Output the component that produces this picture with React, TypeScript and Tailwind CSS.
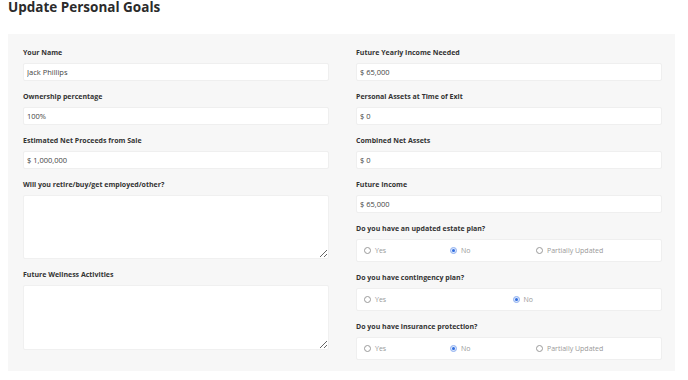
import React from "react";

interface FieldProps {
  label: string;
  children: React.ReactNode;
}

function Field({ label, children }: FieldProps) {
  return (
    <div className="flex flex-col">
      <label className="h-[10px] text-[7px] leading-[10px] font-bold text-[#333]">{label}</label>
      <div className="mt-[5px]">{children}</div>
    </div>
  );
}

function TextInput({ value }: { value: string }) {
  return (
    <input
      type="text"
      defaultValue={value}
      className="block w-full h-[18px] rounded-[2px] border border-[#efefef] bg-white px-[3px] text-[7.5px] text-[#444] outline-none"
    />
  );
}

function TextArea({ h }: { h: string }) {
  return (
    <textarea
      className={`block w-full ${h} appearance-none rounded-[2px] border border-solid border-[#f0f0f0] bg-white px-[3px] text-[7.5px] text-[#444] shadow-none outline-none`}
    />
  );
}

interface RadioGroupProps {
  options: string[];
  selected: string;
  colWidth: string;
}

function RadioGroup({ options, selected, colWidth }: RadioGroupProps) {
  return (
    <div className="flex h-[23px] items-center rounded-[2px] border border-[#efefef] bg-white pl-[7px]">
      {options.map((opt) => {
        const on = opt === selected;
        return (
          <div key={opt} className={`flex items-center gap-[4px] ${colWidth}`}>
            {on ? (
              <span className="flex h-[7px] w-[7px] items-center justify-center rounded-full border border-[#8fb0f0] bg-[#dbe6fb]">
                <span className="h-[3px] w-[3px] rounded-full bg-[#2f6ce0]" />
              </span>
            ) : (
              <span className="h-[7px] w-[7px] rounded-full border border-[#9a9a9a] bg-white" />
            )}
            <span className="text-[7px] leading-[10px] text-[#999]">{opt}</span>
          </div>
        );
      })}
    </div>
  );
}

export default function App() {
  return (
    <div className="min-h-[380px] bg-white pl-[8px] pr-[13px]" style={{ fontFamily: '"Open Sans", "Liberation Sans", sans-serif' }}>
      <h1 className="text-[13.5px] leading-[14px] font-bold text-[#2b2b2b]">Update Personal Goals</h1>
      <div className="mt-[20px] grid grid-cols-2 gap-x-[27px] bg-[#f7f7f7] pt-[14px] pb-[11px] pl-[15px] pr-[13px]">
        <div className="flex flex-col gap-[11px]">
          <Field label="Your Name">
            <TextInput value="Jack Phillips" />
          </Field>
          <Field label="Ownership percentage">
            <TextInput value="100%" />
          </Field>
          <Field label="Estimated Net Proceeds from Sale">
            <TextInput value="$ 1,000,000" />
          </Field>
          <Field label="Will you retire/buy/get employed/other?">
            <TextArea h="h-[64px]" />
          </Field>
          <Field label="Future Wellness Activities">
            <TextArea h="h-[65px]" />
          </Field>
        </div>
        <div className="flex flex-col gap-[11px]">
          <Field label="Future Yearly Income Needed">
            <TextInput value="$ 65,000" />
          </Field>
          <Field label="Personal Assets at Time of Exit">
            <TextInput value="$ 0" />
          </Field>
          <Field label="Combined Net Assets">
            <TextInput value="$ 0" />
          </Field>
          <Field label="Future Income">
            <TextInput value="$ 65,000" />
          </Field>
          <Field label="Do you have an updated estate plan?">
            <RadioGroup options={["Yes", "No", "Partially Updated"]} selected="No" colWidth="w-[86px]" />
          </Field>
          <Field label="Do you have contingency plan?">
            <RadioGroup options={["Yes", "No"]} selected="No" colWidth="w-[149px]" />
          </Field>
          <Field label="Do you have insurance protection?">
            <RadioGroup options={["Yes", "No", "Partially Updated"]} selected="No" colWidth="w-[86px]" />
          </Field>
        </div>
      </div>
    </div>
  );
}
